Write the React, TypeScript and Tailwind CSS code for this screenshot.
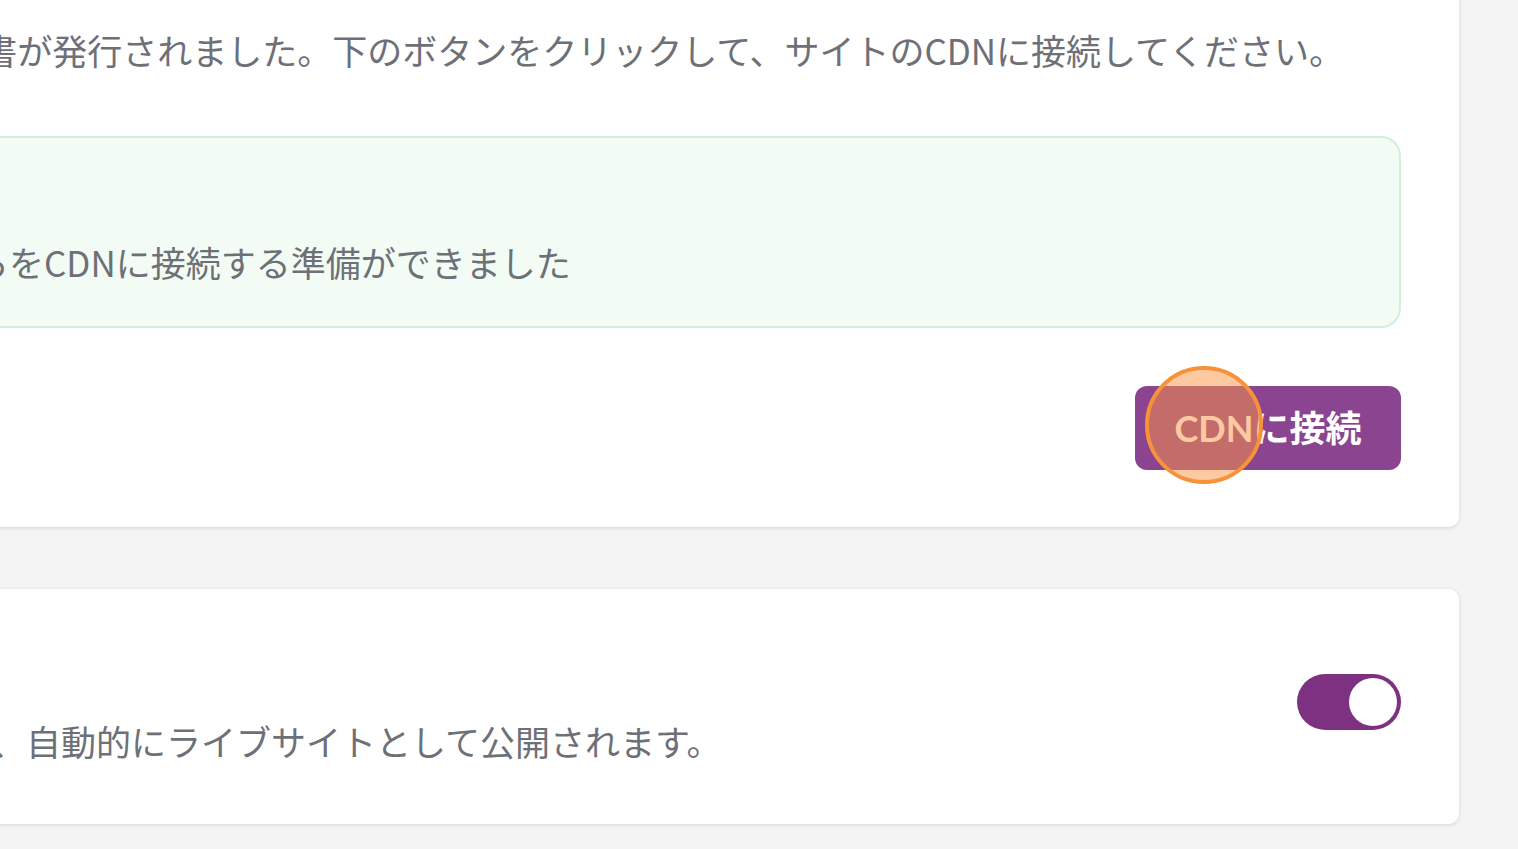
import React from 'react';

const jp = "font-['Noto_Sans_CJK_JP','Noto_Sans',sans-serif]";

const Toggle = ({ on }: { on: boolean }) => (
  <div
    className={`flex h-[56px] w-[104px] shrink-0 items-center rounded-full p-[4px] ${
      on ? 'justify-end bg-[#7e3180]' : 'justify-start bg-[#d1d5db]'
    }`}
  >
    <div className="h-[48px] w-[48px] rounded-full bg-white" />
  </div>
);

export default function App() {
  return (
    <div className={`h-[849px] w-[1518px] overflow-hidden bg-[#f4f4f4] ${jp} text-[#6e7077]`}>
      <div className="ml-[-500px] flex w-[1959px] flex-col gap-[62px]">
        {/* certificate card */}
        <section className="mt-[-30px] rounded-[10px] bg-white pt-[56px] pr-[58px] pb-[57px] pl-[37px] shadow-[0_1px_4px_rgba(0,0,0,0.13)]">
          <p className="whitespace-nowrap text-[35px] leading-[48px]">
            お使いのドメインのSSL証明書が発行されました。下のボタンをクリックして、サイトのCDNに接続してください。
          </p>

          <div className="mt-[62px] rounded-[20px] border-2 border-[#cff1d7] bg-[#f2fcf4] pt-[40px] pr-[36px] pb-[40px] pl-[50px]">
            <p className="text-[35px] font-bold leading-[48px] text-[#3f4a44]">SSL証明書</p>
            <p className="mt-[12px] whitespace-nowrap text-[35px] leading-[48px]">
              検証が全て完了し、これらをCDNに接続する準備ができました
            </p>
          </div>

          <div className="mt-[58px] flex justify-end">
            <div className="relative">
              <button className="flex h-[84px] w-[266px] items-center justify-center rounded-[12px] bg-[#8b4590] font-['Lato','Noto_Sans_CJK_JP',sans-serif] text-[36px] font-bold text-white">
                CDNに接続
              </button>
              {/* click highlight */}
              <div className="pointer-events-none absolute top-[-20px] left-[10px] h-[118px] w-[118px] rounded-full border-[4px] border-[#f7923a] bg-[rgba(251,147,65,0.5)]" />
            </div>
          </div>
        </section>

        {/* auto publish card */}
        <section className="flex items-center justify-between rounded-[10px] bg-white pt-[72px] pr-[58px] pb-[59px] pl-[107px] shadow-[0_1px_4px_rgba(0,0,0,0.13)]">
          <div className="flex flex-col gap-[8px]">
            <p className="text-[35px] font-bold leading-[48px] text-[#3f4146]">自動公開</p>
            <p className="whitespace-nowrap text-[35px] leading-[48px]">
              この設定を有効にすると、自動的にライブサイトとして公開されます。
            </p>
          </div>
          <div className="mb-[22px]">
            <Toggle on />
          </div>
        </section>
      </div>
    </div>
  );
}
